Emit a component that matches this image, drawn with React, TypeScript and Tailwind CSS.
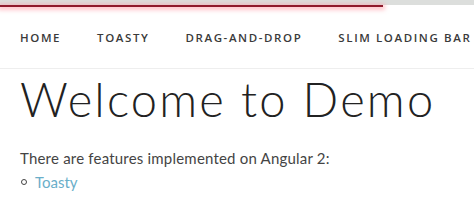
export default function App() {
  const nav = ["Home", "Toasty", "Drag-and-drop", "Slim loading bar"];
  return (
    <div className="w-[474px] h-[203px] overflow-hidden bg-white">
      <div className="h-[5px] bg-[#dcdedc]" />
      <div className="h-[2px] w-[383px] bg-[#8e1b2c] shadow-[0_1px_4px_2px_rgba(255,150,160,0.55)]" />
      <nav className="h-[62px] flex items-center gap-[36px] px-[20px] border-b border-[#eeeeee] whitespace-nowrap">
        {nav.map((n) => (
          <a
            key={n}
            className="uppercase text-[11.5px] font-semibold tracking-[1.6px] text-[#3a3a3a] font-['Open_Sans',sans-serif]"
          >
            {n}
          </a>
        ))}
      </nav>
      <main className="px-[20px] font-['Lato',sans-serif]">
        <h1 className="text-[47px] leading-none font-light text-[#222] mt-[7px] tracking-[2.2px]">
          Welcome to Demo
        </h1>
        <p className="text-[15px] text-[#444] mt-[24px] tracking-[0.2px]">
          There are features implemented on Angular 2:
        </p>
        <ul className="mt-[1px] text-[15px]">
          <li className="flex items-center gap-[8px]">
            <span className="w-[6px] h-[6px] rounded-full border border-[#444] ml-[1px]" />
            <a className="text-[#6aaec9]">Toasty</a>
          </li>
        </ul>
      </main>
    </div>
  );
}
